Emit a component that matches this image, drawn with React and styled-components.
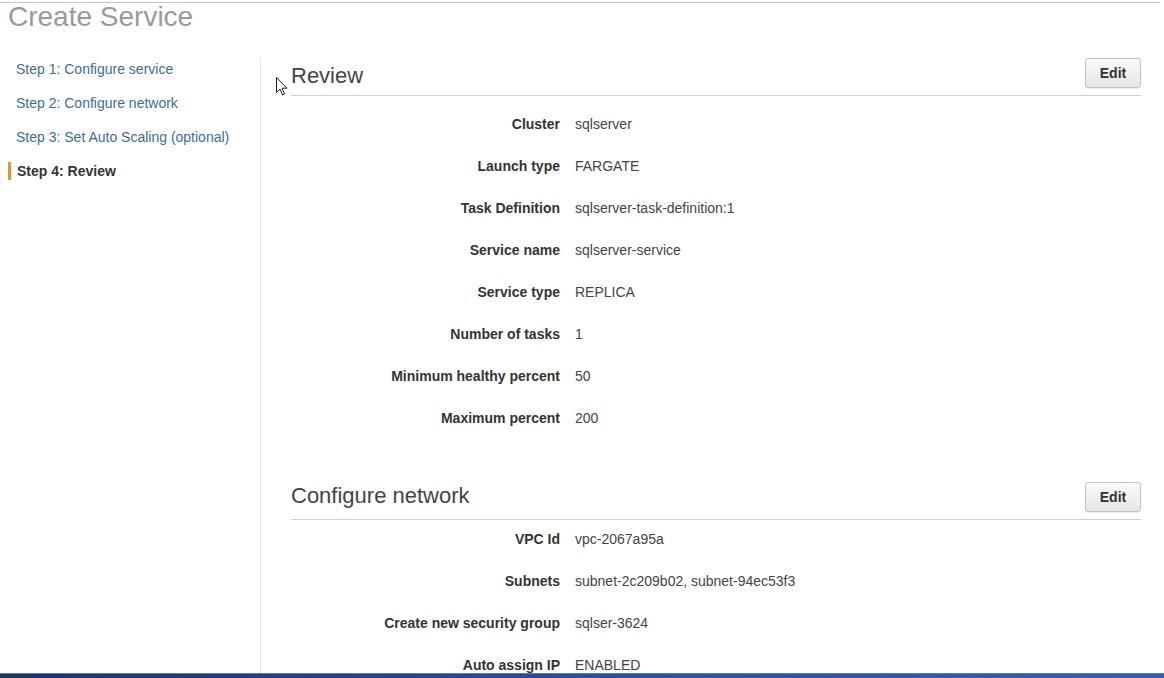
import React from "react";
import styled, { createGlobalStyle } from "styled-components";

const GlobalStyle = createGlobalStyle`
  html, body {
    margin: 0;
    padding: 0;
    background: #fff;
  }
  body {
    font-family: "Liberation Sans", Arial, sans-serif;
    overflow: hidden;
  }
`;

const Page = styled.div`
  position: relative;
  width: 1164px;
  height: 678px;
  display: flex;
  flex-direction: column;
  overflow: hidden;
`;

const TopRule = styled.div`
  margin-top: 2px;
  height: 1px;
  background: #c4c4c4;
  margin-right: 4px;
`;

const Title = styled.h1`
  margin: 0 0 0 8px;
  font-size: 28px;
  line-height: 27px;
  font-weight: normal;
  color: #9a9a9a;
  height: 28px;
`;

const Body = styled.div`
  flex: 1;
  display: flex;
  margin-top: 27px;
  min-height: 0;
`;

const Sidebar = styled.nav`
  width: 252px;
  padding: 2px 0 0 8px;
  border-right: 1px solid #e3e3e3;
  display: flex;
  flex-direction: column;
  gap: 16px;
`;

const StepLink = styled.a`
  display: block;
  height: 18px;
  line-height: 18px;
  font-size: 14px;
  padding-left: ${(p) => (p.$active ? "6px" : "8px")};
  border-left: ${(p) => (p.$active ? "3px solid #e8932c" : "none")};
  color: ${(p) => (p.$active ? "#333" : "#3b6f93")};
  font-weight: ${(p) => (p.$active ? "bold" : "normal")};
  text-decoration: none;
  cursor: pointer;
`;

const Main = styled.main`
  flex: 1;
  padding: 0 23px 0 30px;
  overflow: hidden;
`;

const Section = styled.section`
  margin-bottom: 43px;
`;

const SectionHeader = styled.div`
  display: flex;
  justify-content: space-between;
  align-items: flex-start;
  height: 37px;
  border-bottom: 1px solid #cfcfcf;
`;

const SectionTitle = styled.h2`
  margin: ${(p) => p.$top}px 0 0 0;
  font-size: 22px;
  line-height: 26px;
  font-weight: normal;
  color: #444;
`;

const EditButton = styled.button`
  width: 56px;
  height: 30px;
  font-family: inherit;
  font-size: 14px;
  font-weight: bold;
  color: #333;
  background: linear-gradient(#fafafa, #e6e6e6);
  border: 1px solid #c2c2c2;
  border-radius: 3px;
  box-shadow: 0 1px 1px rgba(0, 0, 0, 0.08);
  cursor: pointer;
`;

const Rows = styled.div`
  margin-top: ${(p) => p.$top}px;
`;

const Row = styled.div`
  display: grid;
  grid-template-columns: 269px 1fr;
  column-gap: 15px;
  height: 42px;
  align-items: center;
  font-size: 14px;
`;

const Label = styled.div`
  text-align: right;
  font-weight: bold;
  color: #333;
`;

const Value = styled.div`
  color: #444;
`;

const Cursor = styled.svg`
  position: absolute;
  left: 276px;
  top: 77px;
`;

const Taskbar = styled.div`
  height: 4px;
  background: linear-gradient(90deg, #1b3466, #2d4f94 50%, #3a5fa6);
  border-top: 1px solid #5d7bb8;
`;

const steps = [
  "Step 1: Configure service",
  "Step 2: Configure network",
  "Step 3: Set Auto Scaling (optional)",
  "Step 4: Review",
];

const review = [
  ["Cluster", "sqlserver"],
  ["Launch type", "FARGATE"],
  ["Task Definition", "sqlserver-task-definition:1"],
  ["Service name", "sqlserver-service"],
  ["Service type", "REPLICA"],
  ["Number of tasks", "1"],
  ["Minimum healthy percent", "50"],
  ["Maximum percent", "200"],
];

const network = [
  ["VPC Id", "vpc-2067a95a"],
  ["Subnets", "subnet-2c209b02, subnet-94ec53f3"],
  ["Create new security group", "sqlser-3624"],
  ["Auto assign IP", "ENABLED"],
];

function ReviewSection({ title, rows, titleTop, rowsTop }) {
  return (
    <Section>
      <SectionHeader>
        <SectionTitle $top={titleTop}>{title}</SectionTitle>
        <EditButton>Edit</EditButton>
      </SectionHeader>
      <Rows $top={rowsTop}>
        {rows.map(([label, value]) => (
          <Row key={label}>
            <Label>{label}</Label>
            <Value>{value}</Value>
          </Row>
        ))}
      </Rows>
    </Section>
  );
}

export default function App() {
  return (
    <>
      <GlobalStyle />
      <Page>
        <TopRule />
        <Title>Create Service</Title>
        <Body>
          <Sidebar>
            {steps.map((s, i) => (
              <StepLink key={s} $active={i === 3}>
                {s}
              </StepLink>
            ))}
          </Sidebar>
          <Main>
            <ReviewSection title="Review" rows={review} titleTop={5} rowsTop={7} />
            <ReviewSection
              title="Configure network"
              rows={network}
              titleTop={1}
              rowsTop={-2}
            />
          </Main>
        </Body>
        <Taskbar />
        <Cursor width="12" height="19" viewBox="0 0 12 19">
          <path
            d="M0.5 0.5 L0.5 15.5 L4 12 L6.5 18 L8.5 17 L6 11.2 L11 11.2 Z"
            fill="#fff"
            stroke="#222"
            strokeWidth="1"
            strokeLinejoin="round"
          />
        </Cursor>
      </Page>
    </>
  );
}
